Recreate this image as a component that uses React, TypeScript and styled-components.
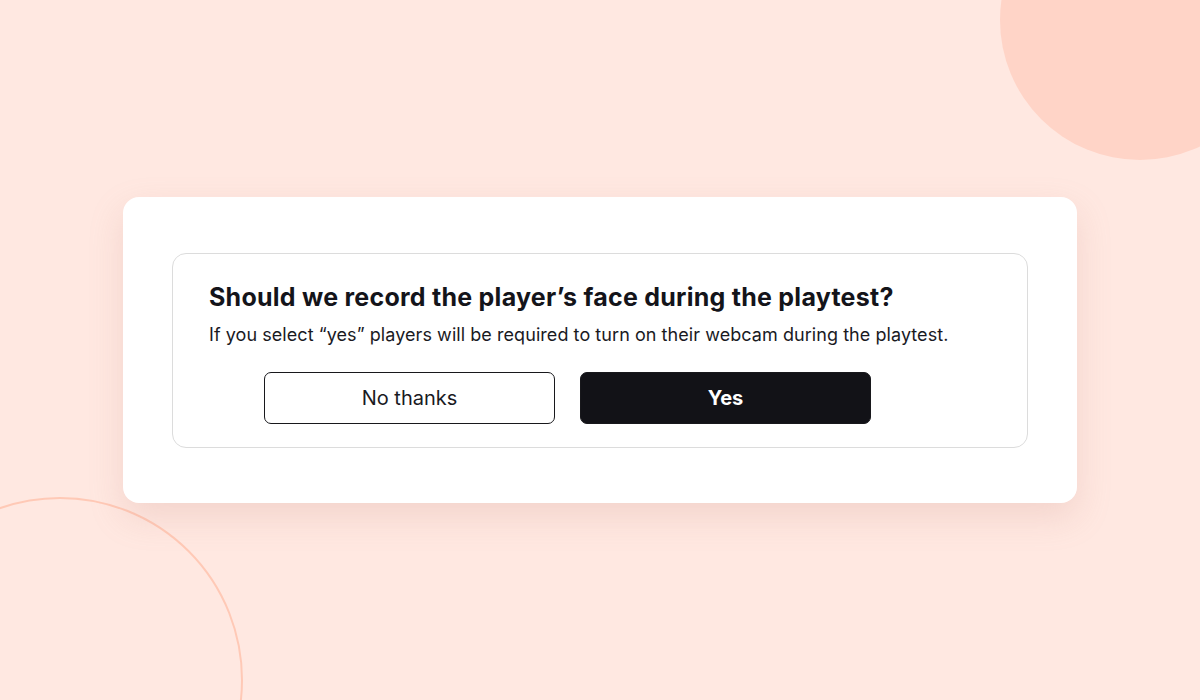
import React from 'react';
import styled, { createGlobalStyle } from 'styled-components';

const GlobalStyle = createGlobalStyle`
  html, body {
    margin: 0;
    padding: 0;
  }
  body {
    font-family: Inter, "Noto Sans", sans-serif;
    background: #ffe8e1;
  }
`;

const Page = styled.main`
  position: relative;
  width: 1200px;
  height: 700px;
  overflow: hidden;
  background: #ffe8e1;
  display: flex;
  align-items: flex-start;
  justify-content: center;
  padding-top: 197px;
  box-sizing: border-box;
`;

const Blob = styled.div`
  position: absolute;
  left: 1000px;
  top: -120px;
  width: 280px;
  height: 280px;
  border-radius: 50%;
  background: #ffd4c7;
`;

const Ring = styled.div`
  position: absolute;
  left: -123px;
  top: 497px;
  width: 366px;
  height: 366px;
  border-radius: 50%;
  border: 2px solid #ffc9b6;
  box-sizing: border-box;
`;

const Card = styled.section`
  position: relative;
  z-index: 1;
  width: 954px;
  height: 306px;
  box-sizing: border-box;
  background: #fff;
  border-radius: 16px;
  box-shadow: 0 14px 34px rgba(200, 140, 130, 0.22);
  padding: 56px 49px 0;
`;

const Question = styled.div`
  border: 1px solid #dcdcdc;
  border-radius: 14px;
  padding: 25px 36px 23px;
`;

const Title = styled.h2`
  margin: 0;
  font-size: 25px;
  line-height: 36px;
  font-weight: 700;
  color: #14141a;
  letter-spacing: 0.25px;
`;

const Hint = styled.p`
  margin: 7px 0 0;
  font-size: 18px;
  line-height: 26px;
  color: #1a1a1f;
  letter-spacing: 0.06px;
`;

const Actions = styled.div`
  display: flex;
  gap: 25px;
  margin: 24px 0 0 55px;
`;

const Choice = styled.button<{ $primary?: boolean }>`
  width: 291px;
  height: 52px;
  box-sizing: border-box;
  border-radius: 7px;
  font-family: Inter, "Noto Sans", sans-serif;
  font-size: 20px;
  cursor: pointer;
  border: 1px solid #18181c;
  background: ${p => (p.$primary ? '#121217' : '#fff')};
  color: ${p => (p.$primary ? '#fff' : '#1a1a1f')};
  font-weight: ${p => (p.$primary ? 700 : 400)};
`;

export default function App() {
  return (
    <Page>
      <GlobalStyle />
      <Blob />
      <Ring />
      <Card>
        <Question>
          <Title>Should we record the player’s face during the playtest?</Title>
          <Hint>If you select “yes” players will be required to turn on their webcam during the playtest.</Hint>
          <Actions>
            <Choice>No thanks</Choice>
            <Choice $primary>Yes</Choice>
          </Actions>
        </Question>
      </Card>
    </Page>
  );
}
